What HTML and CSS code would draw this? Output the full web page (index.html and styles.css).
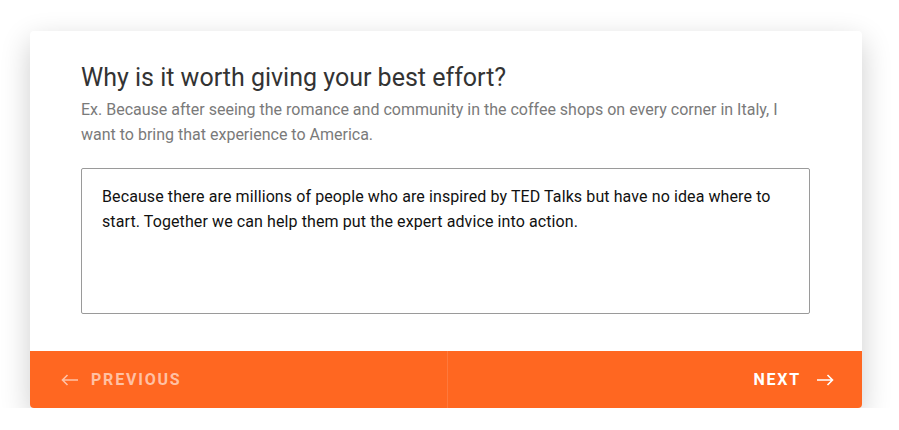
FILE: index.html
```html
<!DOCTYPE html>
<html lang="en">
  <head>
    <meta charset="UTF-8" />
    <meta name="viewport" content="width=device-width, initial-scale=1.0" />
    <title>Why is it worth giving your best effort?</title>
    <link rel="stylesheet" href="styles.css">
  </head>
  <body>
    <div class="card">
      <div class="card-body">
        <h1 class="question">Why is it worth giving your best effort?</h1>
        <p class="hint">
          Ex. Because after seeing the romance and community in the coffee shops on every corner in Italy, I want to bring that experience to America.
        </p>
        <div class="answer">Because there are millions of people who are inspired by TED Talks but have no idea where to start. Together we can help them put the expert advice into action.</div>
      </div>
      <div class="card-nav">
        <button class="nav-btn prev">
          <svg width="18" height="12" viewBox="0 0 18 12" fill="none" stroke="currentColor" stroke-width="1.6">
            <path d="M17 6H1.5M6.5 1L1.5 6l5 5" />
          </svg>
          PREVIOUS
        </button>
        <button class="nav-btn next">
          NEXT
          <svg width="18" height="12" viewBox="0 0 18 12" fill="none" stroke="currentColor" stroke-width="1.6">
            <path d="M1 6h15.5M11.5 1l5 5-5 5" />
          </svg>
        </button>
      </div>
    </div>
  </body>
</html>
```

FILE: styles.css
```css
body {
  margin: 0;
  padding: 31px 37px 0 30px;
  background: #fff;
  font-family: Roboto, "Liberation Sans", sans-serif;
}
.card {
  width: 832px;
  background: #fff;
  border-radius: 4px;
  box-shadow: 0 10px 30px rgba(0, 0, 0, 0.2);
  overflow: hidden;
}
.card-body {
  padding: 32px 52px 37px 51px;
}
.question {
  margin: 0;
  font-size: 25px;
  font-weight: 400;
  line-height: 30px;
  color: #333;
}
.hint {
  margin: 4px 0 0;
  font-size: 16px;
  line-height: 25px;
  color: #7a7a7a;
}
.answer {
  margin-top: 21px;
  height: 146px;
  box-sizing: border-box;
  padding: 15px 20px;
  border: 1px solid #9a9a9a;
  border-radius: 2px;
  font-size: 16px;
  line-height: 25px;
  letter-spacing: 0.1px;
  color: #111;
}
.card-nav {
  display: flex;
  height: 57px;
  background: #ff6721;
}
.nav-btn {
  flex: 1;
  display: flex;
  align-items: center;
  gap: 12px;
  border: 0;
  background: none;
  font-family: inherit;
  font-size: 16px;
  font-weight: 700;
  letter-spacing: 1.8px;
  cursor: pointer;
}
.prev {
  padding-left: 31px;
  color: rgba(255, 255, 255, 0.6);
  border-right: 1px solid rgba(255, 255, 255, 0.12);
}
.next {
  justify-content: flex-end;
  padding-right: 28px;
  color: #fff;
  gap: 15px;
}
```
